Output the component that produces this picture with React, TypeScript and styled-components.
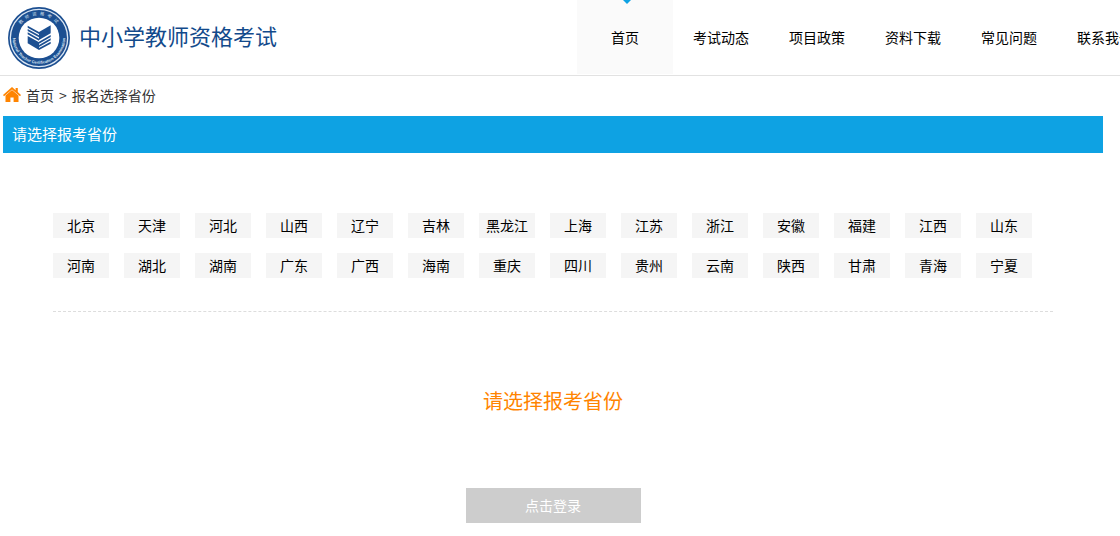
import React, { useState } from "react";
import styled, { createGlobalStyle } from "styled-components";

const GlobalStyle = createGlobalStyle`
  * { box-sizing: border-box; }
  body {
    margin: 0;
    background: #fff;
    color: #000;
    font: 14px/20px "Noto Sans CJK SC", sans-serif;
    overflow-x: hidden;
  }
  a { color: inherit; text-decoration: none; }
`;

const Header = styled.header`
  display: flex;
  height: 76px;
  overflow: hidden;
  border-bottom: 1px solid #e2e2e2;
`;

const Brand = styled.a`
  display: flex;
  flex: 0 0 577px;
  align-items: center;
  gap: 8px;
  padding-left: 7px;
`;

const BrandName = styled.span`
  padding-bottom: 6px;
  color: #134a8b;
  font-size: 22px;
  line-height: 32px;
  font-weight: 400;
`;

const Nav = styled.nav`
  display: flex;
  flex: none;
  height: 74px;
`;

const NavLink = styled.a<{ $active?: boolean }>`
  position: relative;
  width: 96px;
  line-height: 74px;
  text-align: center;
  background: ${(p) => (p.$active ? "#fafafa" : "transparent")};
`;

const Marker = styled.svg`
  position: absolute;
  top: 0;
  left: 46px;
`;

const Main = styled.main`
  padding: 0 17px 0 3px;
`;

const Breadcrumb = styled.nav`
  display: flex;
  align-items: center;
  gap: 5px;
  height: 40px;
  padding-bottom: 2px;
  color: #333;
`;

const PanelTitle = styled.h1`
  margin: 0;
  padding: 0 9px 2px;
  background: #0ea2e3;
  color: #fff;
  font-size: 15px;
  line-height: 35px;
  font-weight: 400;
`;

const Provinces = styled.div`
  display: flex;
  flex-wrap: wrap;
  gap: 15px;
  margin: 60px 50px 0;
  padding-bottom: 33px;
  border-bottom: 1px dashed #ddd;
`;

const Province = styled.button`
  width: 56px;
  height: 25px;
  padding: 0 0 2px;
  border: 0;
  background: #f5f5f5;
  color: #000;
  font: inherit;
  white-space: nowrap;
  cursor: pointer;
`;

const SignIn = styled.section`
  display: flex;
  flex-direction: column;
  align-items: center;
  gap: 72px;
  padding: 74px 0 13px;
`;

const Prompt = styled.p`
  margin: 0;
  color: #ff8400;
  font-size: 20px;
  line-height: 30px;
`;

const LoginButton = styled.button`
  width: 175px;
  height: 35px;
  padding: 0 0 2px;
  border: 0;
  background: #cdcdcd;
  color: #fff;
  font: inherit;
`;

const navItems = ["首页", "考试动态", "项目政策", "资料下载", "常见问题", "联系我们"];

const provinces = [
  "北京", "天津", "河北", "山西", "辽宁", "吉林", "黑龙江",
  "上海", "江苏", "浙江", "安徽", "福建", "江西", "山东",
  "河南", "湖北", "湖南", "广东", "广西", "海南", "重庆",
  "四川", "贵州", "云南", "陕西", "甘肃", "青海", "宁夏",
];

function Emblem() {
  return (
    <svg width="64" height="64" viewBox="0 0 192 192" aria-hidden="true">
      <defs>
        <path id="arc-top" d="M28 96a68 68 0 0 1 136 0" />
        <path id="arc-bottom" d="M18 82a79 79 0 1 0 156 0" />
      </defs>
      <circle cx="96" cy="96" r="93" fill="#1c4f91" />
      <circle cx="96" cy="96" r="86" fill="none" stroke="#dbe6f3" strokeWidth="4" />
      <circle cx="96" cy="96" r="61" fill="#fff" />
      <text fill="#dbe6f3" fontSize="13" textAnchor="middle" letterSpacing="9">
        <textPath href="#arc-top" startOffset="51%">教师资格考试</textPath>
      </text>
      <text fill="#dbe6f3" fontSize="12" fontWeight="700" fontFamily="Liberation Sans, sans-serif" textAnchor="middle">
        <textPath href="#arc-bottom" startOffset="50%">National Teacher Certification Examination</textPath>
      </text>
      <g fill="#1c4f91">
        <path d="M62 59l34 19v6L62 65z" />
        <path d="M62 69l34 19v6L62 75z" />
        <path d="M62 79l34 19v6L62 85z" />
        <path d="M62 90l34 19v23l-34-20z" />
        <path d="M131 58v24l-35 20V78z" />
        <path d="M131 87v6l-35 20v-6z" />
        <path d="M131 97v6l-35 20v-6z" />
        <path d="M131 107v6l-35 19v-6z" />
      </g>
    </svg>
  );
}

function HomeIcon() {
  return (
    <svg width="18" height="16" viewBox="0 0 18 16" fill="#ff8400" aria-hidden="true">
      <path d="M9 0L0 8l1 1.2L9 2.4l8 6.8L18 8l-3.2-2.9V1h-2.2v2.2z" />
      <path d="M9 3L2.5 8.6V15h4.9v-4.6h3.2V15h4.9V8.6z" />
    </svg>
  );
}

export default function App() {
  const [selected, setSelected] = useState("");
  return (
    <>
      <GlobalStyle />
      <Header>
        <Brand href="#">
          <Emblem />
          <BrandName>中小学教师资格考试</BrandName>
        </Brand>
        <Nav>
          {navItems.map((item, i) => (
            <NavLink key={item} href="#" $active={i === 0}>
              {i === 0 && (
                <Marker width="8" height="4" viewBox="0 0 8 4" fill="#0ea2e3" aria-hidden="true">
                  <path d="M0 0h8L4 4z" />
                </Marker>
              )}
              {item}
            </NavLink>
          ))}
        </Nav>
      </Header>
      <Main>
        <Breadcrumb>
          <HomeIcon />
          <a href="#">首页</a>
          <span>&gt;</span>
          <span>报名选择省份</span>
        </Breadcrumb>
        <PanelTitle>请选择报考省份</PanelTitle>
        <Provinces>
          {provinces.map((name) => (
            <Province key={name} type="button" onClick={() => setSelected(name)}>
              {name}
            </Province>
          ))}
        </Provinces>
        <SignIn>
          <Prompt>{selected || "请选择报考省份"}</Prompt>
          <LoginButton type="button">点击登录</LoginButton>
        </SignIn>
      </Main>
    </>
  );
}
